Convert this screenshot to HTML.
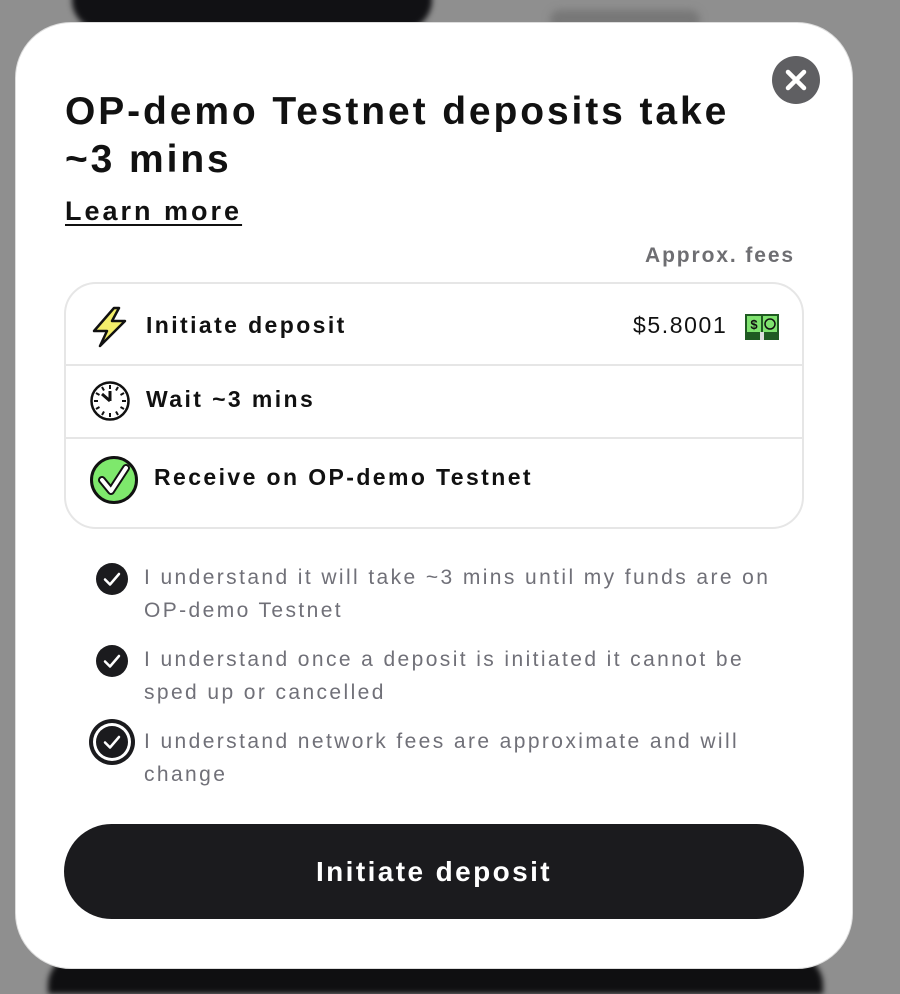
<!DOCTYPE html>
<html><head><meta charset="utf-8"><style>
*{margin:0;padding:0;box-sizing:border-box}
html{width:900px;height:994px;overflow:hidden}
body{width:900px;height:994px;overflow:hidden;background:#8f8f8f;font-family:"Liberation Sans",sans-serif;position:relative}
.bg1{position:absolute;left:72px;top:-30px;width:360px;height:60px;background:#111114;border-radius:30px;filter:blur(3px)}
.bg2{position:absolute;left:550px;top:10px;width:150px;height:20px;background:#777;border-radius:10px;filter:blur(4px)}
.bg3{position:absolute;left:48px;top:955px;width:775px;height:39px;background:#0f0f11;border-radius:30px 30px 0 0;filter:blur(3px)}
.modal{position:absolute;left:15px;top:22px;width:838px;height:947px;background:#fff;border-radius:56px;border:1px solid #ddd}
.abs{position:absolute}
h1{position:absolute;left:65px;top:88px;font-size:39px;line-height:48px;font-weight:700;color:#111;letter-spacing:2.9px}
.learn{left:65px;top:196px;font-size:27px;font-weight:700;color:#111;text-decoration:underline;text-underline-offset:4px;text-decoration-thickness:2px;letter-spacing:3px}
.approx{right:105px;top:244px;font-size:21px;font-weight:700;color:#6e6e72;letter-spacing:1.9px}
.card{left:64px;top:282px;width:740px;height:247px;border:2px solid #e6e6e6;border-radius:32px}
.sep{left:66px;width:736px;height:2px;background:#e6e6e6}
.row{font-size:23px;font-weight:700;color:#111;letter-spacing:2.4px}
.chk{font-size:21px;color:#707078;line-height:33px;letter-spacing:2.4px;left:144px;width:700px;white-space:nowrap}
.btn{left:64px;top:824px;width:740px;height:95px;background:#1b1b1e;border-radius:48px;color:#fff;font-size:28px;font-weight:700;text-align:center;line-height:95px;letter-spacing:2.4px}
</style></head><body>
<div class="bg1"></div><div class="bg2"></div><div class="bg3"></div>
<div class="modal"></div>
<svg class="abs" style="left:772px;top:56px" width="48" height="48" viewBox="0 0 48 48"><circle cx="24" cy="24" r="24" fill="#5f5f62"/><path d="M16 16L32 32M32 16L16 32" stroke="#fff" stroke-width="4.5" stroke-linecap="round"/></svg>
<h1>OP-demo Testnet deposits take<br>~3 mins</h1>
<div class="abs learn">Learn more</div>
<div class="abs approx">Approx. fees</div>
<div class="abs card"></div>
<div class="abs sep" style="top:364px"></div>
<div class="abs sep" style="top:437px"></div>
<svg class="abs" style="left:90px;top:306px" width="40" height="42" viewBox="0 0 40 42"><path d="M24 2L4 25H17L10 40L35 15H22L29 2Z" fill="#f3ee6a" stroke="#111" stroke-width="2.5" stroke-linejoin="round"/></svg>
<div class="abs row" style="left:146px;top:312px">Initiate deposit</div>
<div class="abs row" style="left:633px;top:312px;font-weight:400;color:#111;letter-spacing:1.6px">$5.8001</div>
<svg class="abs" style="left:745px;top:314px" width="34" height="26" viewBox="0 0 34 26"><rect x="0" y="0" width="34" height="26" fill="#1f5a22"/><rect x="2" y="2" width="14" height="16" fill="#7fe36f"/><rect x="18" y="2" width="14" height="16" fill="#7fe36f"/><text x="9" y="15" font-size="13" font-weight="700" text-anchor="middle" font-family="Liberation Sans" fill="#111">$</text><circle cx="25" cy="10" r="5" fill="none" stroke="#111" stroke-width="1.5"/><rect x="15" y="18" width="4" height="8" fill="#ddd"/></svg>
<svg class="abs" style="left:89px;top:380px" width="42" height="42" viewBox="0 0 42 42"><circle cx="21" cy="21" r="18.5" fill="#fff" stroke="#111" stroke-width="2.5"/><g stroke="#111" stroke-width="2"><path d="M21 5v4M21 33v4M5 21h4M33 21h4M29 7l-2 3.5M35 13l-3.5 2M35 29l-3.5-2M29 35l-2-3.5M13 35l2-3.5M7 29l3.5-2M7 13l3.5 2M13 7l2 3.5"/><path d="M21 21L21 11M21 21L13 14" stroke-width="3"/></g></svg>
<div class="abs row" style="left:146px;top:386px">Wait ~3 mins</div>
<svg class="abs" style="left:89px;top:455px" width="50" height="50" viewBox="0 0 50 50"><circle cx="25" cy="25" r="22.5" fill="#7ee86c" stroke="#111" stroke-width="3"/><path d="M13 25l9 11L37 13" fill="none" stroke="#111" stroke-width="8" stroke-linecap="round" stroke-linejoin="round"/><path d="M13 25l9 11L37 13" fill="none" stroke="#fff" stroke-width="4" stroke-linecap="round" stroke-linejoin="round"/></svg>
<div class="abs row" style="left:154px;top:464px">Receive on OP-demo Testnet</div>
<svg class="abs" style="left:95px;top:562px" width="34" height="34" viewBox="0 0 34 34"><circle cx="17" cy="17" r="16" fill="#1b1b1e"/><path d="M10 17.5l5 5L24 12" fill="none" stroke="#fff" stroke-width="2.5" stroke-linecap="round" stroke-linejoin="round"/></svg>
<div class="abs chk" style="top:561px">I understand it will take ~3 mins until my funds are on<br>OP-demo Testnet</div>
<svg class="abs" style="left:95px;top:644px" width="34" height="34" viewBox="0 0 34 34"><circle cx="17" cy="17" r="16" fill="#1b1b1e"/><path d="M10 17.5l5 5L24 12" fill="none" stroke="#fff" stroke-width="2.5" stroke-linecap="round" stroke-linejoin="round"/></svg>
<div class="abs chk" style="top:643px">I understand once a deposit is initiated it cannot be<br>sped up or cancelled</div>
<svg class="abs" style="left:88px;top:718px" width="48" height="48" viewBox="0 0 48 48"><circle cx="24" cy="24" r="23" fill="#1b1b1e"/><circle cx="24" cy="24" r="19" fill="#fff"/><circle cx="24" cy="24" r="16" fill="#1b1b1e"/><path d="M17 24.5l5 5L31 19" fill="none" stroke="#fff" stroke-width="2.5" stroke-linecap="round" stroke-linejoin="round"/></svg>
<div class="abs chk" style="top:725px">I understand network fees are approximate and will<br>change</div>
<div class="abs btn">Initiate deposit</div>
</body></html>
